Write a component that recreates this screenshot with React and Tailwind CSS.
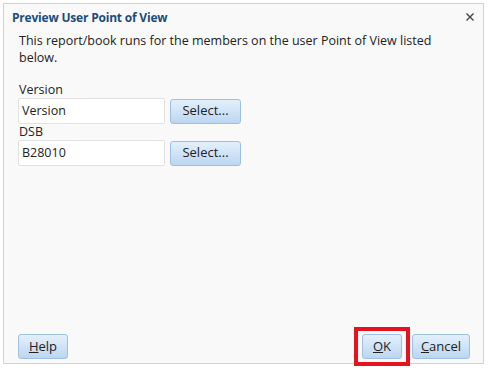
export default function App() {
  const font = { fontFamily: '"Open Sans", "Noto Sans", sans-serif' };
  const btn =
    "h-[25px] rounded-[3px] border border-[#9dbfe2] bg-gradient-to-b from-[#e3f0fc] to-[#bcd6f1] text-[13px] text-[#222] flex items-center justify-center";
  return (
    <div className="w-[490px] h-[368px] bg-white pt-[3px] pl-[3px] pr-[6px] pb-[4px]" style={font}>
      <div className="h-full border border-[#c5d5e8] bg-[#f9f9f9] flex flex-col">
        <div className="flex items-start justify-between pl-[8px] pr-[9px] pt-[5px]">
          <div className="text-[12px] font-bold text-[#1b4d7a] leading-[18px] tracking-[-0.2px]">Preview User Point of View</div>
          <svg width="8" height="8" viewBox="0 0 8 8" className="mt-[4px]">
            <path d="M0.5 0.5L7.5 7.5M7.5 0.5L0.5 7.5" stroke="#444" strokeWidth="1.4" />
          </svg>
        </div>
        <div className="px-[15px] pt-[5px] text-[12.5px] leading-[17px] text-[#222]">
          This report/book runs for the members on the user Point of View listed below.
        </div>
        <div className="px-[14px] pt-[15px] flex flex-col">
          <div className="text-[12.5px] leading-[17px] text-[#222] pl-[1px]">Version</div>
          <div className="flex gap-[5px] items-center">
            <div className="w-[147px] h-[26px] border border-[#e2e2e2] rounded-[2px] bg-white text-[12.5px] text-[#222] flex items-center pl-[3px]">Version</div>
            <div className={btn + " w-[71px]"}>Select...</div>
          </div>
          <div className="text-[12.5px] leading-[16px] text-[#222] pl-[1px]">DSB</div>
          <div className="flex gap-[5px] items-center">
            <div className="w-[147px] h-[26px] border border-[#e2e2e2] rounded-[2px] bg-white text-[12.5px] text-[#222] flex items-center pl-[3px]">B28010</div>
            <div className={btn + " w-[71px]"}>Select...</div>
          </div>
        </div>
        <div className="flex-1" />
        <div className="flex items-center pl-[14px] pr-[13px] pb-[4px]">
          <div className={btn + " w-[50px]"}>
            <span><span className="underline">H</span>elp</span>
          </div>
          <div className="flex-1" />
          <div className="relative border-[4px] border-[#e3141f] px-[4px] py-[3px] -my-[7px] mr-[2px]">
            <div className={btn + " w-[40px]"}>
              <span><span className="underline">O</span>K</span>
            </div>
          </div>
          <div className={btn + " w-[58px]"}>
            <span><span className="underline">C</span>ancel</span>
          </div>
        </div>
      </div>
    </div>
  );
}
